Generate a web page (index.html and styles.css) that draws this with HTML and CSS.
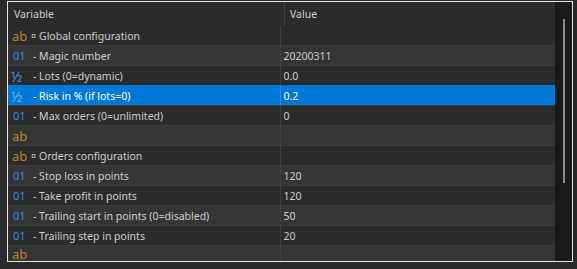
FILE: index.html
```html
<!DOCTYPE html>
<html>

<head>
    <link rel="stylesheet" href="styles.css">
</head>

<body>
    <div class="frame">
        <div class="grid">
            <div class="row head">
                <div class="cell">Variable</div>
                <div class="cell val">Value</div>
            </div>
            <div class="row first">
                <div class="cell"><span class="ico str">ab</span><span class="grp">¤</span>Global configuration</div>
                <div class="cell val"></div>
            </div>
            <div class="row alt">
                <div class="cell"><span class="ico int">01</span><span class="name">- Magic number</span></div>
                <div class="cell val">20200311</div>
            </div>
            <div class="row">
                <div class="cell"><span class="ico dbl">½</span><span class="name">- Lots (0=dynamic)</span></div>
                <div class="cell val">0.0</div>
            </div>
            <div class="row selected">
                <div class="cell"><span class="ico dbl">½</span><span class="name">- Risk in % (if lots=0)</span></div>
                <div class="cell val">0.2</div>
            </div>
            <div class="row">
                <div class="cell"><span class="ico int">01</span><span class="name">- Max orders (0=unlimited)</span></div>
                <div class="cell val">0</div>
            </div>
            <div class="row alt">
                <div class="cell"><span class="ico str">ab</span></div>
                <div class="cell val"></div>
            </div>
            <div class="row">
                <div class="cell"><span class="ico str">ab</span><span class="grp">¤</span>Orders configuration</div>
                <div class="cell val"></div>
            </div>
            <div class="row alt">
                <div class="cell"><span class="ico int">01</span><span class="name">- Stop loss in points</span></div>
                <div class="cell val">120</div>
            </div>
            <div class="row">
                <div class="cell"><span class="ico int">01</span><span class="name">- Take profit in points</span></div>
                <div class="cell val">120</div>
            </div>
            <div class="row alt">
                <div class="cell"><span class="ico int">01</span><span class="name">- Trailing start in points (0=disabled)</span></div>
                <div class="cell val">50</div>
            </div>
            <div class="row">
                <div class="cell"><span class="ico int">01</span><span class="name">- Trailing step in points</span></div>
                <div class="cell val">20</div>
            </div>
            <div class="row alt last">
                <div class="cell"><span class="ico str">ab</span></div>
                <div class="cell val"></div>
            </div>
        </div>
        <div class="scrollbar">
            <div class="thumb"></div>
        </div>
    </div>
</body>

</html>
```

FILE: styles.css
```css
body {
    margin: 0;
    background: #2a2a2a;
    font-family: 'Noto Sans', sans-serif;
    font-size: 10.5px;
    color: #cdcdcd;
    height: 269px;
    overflow: hidden;
}

.frame {
    margin: 1px 0 0 7px;
    width: 564px;
    height: 259px;
    border: 1px solid #e6e6e6;
    display: flex;
    overflow: hidden;
}

.grid {
    width: 547px;
    display: flex;
    flex-direction: column;
    background: #2b2b2b;
}

.row {
    display: flex;
    height: 19px;
    border-top: 1px solid #3d3d3d;
    background: #2b2b2b;
    flex-shrink: 0;
}

.row.alt {
    background: #353535;
}

.row.head {
    height: 23px;
    border-top: none;
}

.row.first {
    border-top-color: #2b2b2b;
}

.row.selected {
    background: #0078d7;
    border-top-color: #0078d7;
    color: #fff;
}

.row.last {
    height: 15px;
}

.cell {
    width: 273px;
    display: flex;
    align-items: center;
    white-space: nowrap;
    overflow: hidden;
    line-height: 14px;
}

.cell.val {
    border-left: 1px solid #3d3d3d;
    padding-left: 3px;
}

.head .cell {
    padding-left: 6px;
}

.head .cell.val {
    padding-left: 5px;
    width: 268px;
}

.selected .cell.val {
    border-left-color: #3a8ed6;
}

.ico {
    width: 21px;
    padding-left: 4px;
    flex-shrink: 0;
    font-size: 13px;
}

.ico.str {
    color: #b7842a;
}

.ico.int {
    color: #3f8ee0;
    font-size: 11px;
    padding-left: 5px;
    width: 20px;
}

.ico.dbl {
    color: #3f8ee0;
    font-size: 14.5px;
    padding-left: 3px;
    width: 22px;
}

.selected .ico.dbl {
    color: #6ab0f0;
}

.grp {
    width: 8px;
    margin-left: -2px;
    font-size: 9px;
    flex-shrink: 0;
}

.scrollbar {
    width: 17px;
    background: #191919;
    position: relative;
}

.thumb {
    position: absolute;
    left: 8px;
    top: 17px;
    width: 2px;
    height: 164px;
    background: #8c8c8c;
}
```
